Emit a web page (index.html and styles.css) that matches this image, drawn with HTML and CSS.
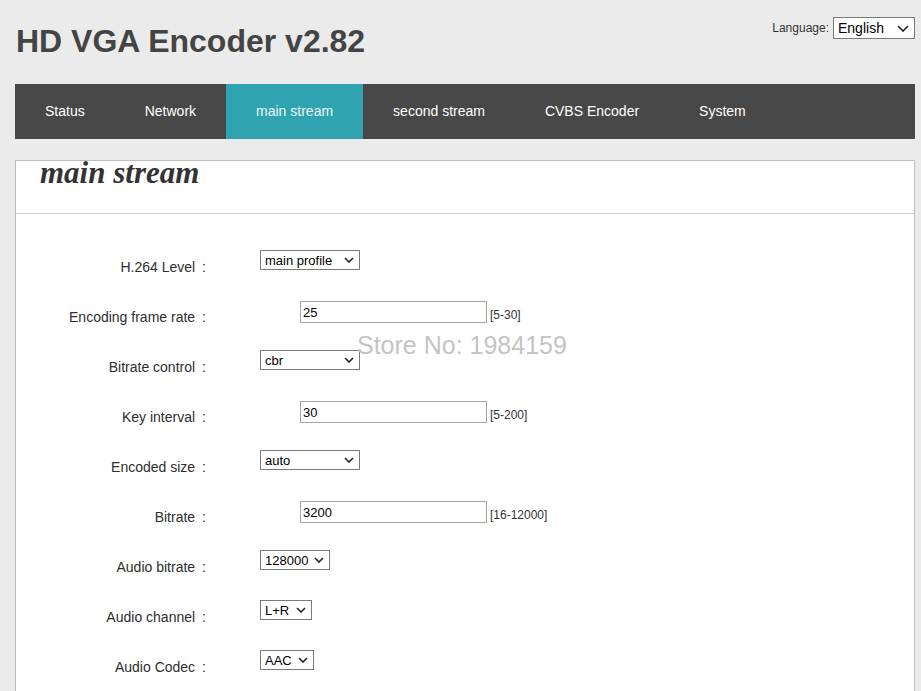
FILE: index.html
```html
<!DOCTYPE html>
<html lang="en">
<head>
<meta charset="utf-8">
<title>HD VGA Encoder v2.82</title>
<link rel="stylesheet" href="styles.css">
</head>
<body>
<div class="page">
  <header class="top">
    <h1 class="title">HD VGA Encoder v2.82</h1>
    <div class="lang">
      <span class="lang-label">Language:</span>
      <span class="select lang-select">English<svg class="chev" width="12" height="7" viewBox="0 0 12 7"><path d="M1 1 L6 6 L11 1" fill="none" stroke="#222" stroke-width="1.6"/></svg></span>
    </div>
  </header>

  <nav class="nav">
    <a class="nav-item">Status</a>
    <a class="nav-item">Network</a>
    <a class="nav-item active">main stream</a>
    <a class="nav-item">second stream</a>
    <a class="nav-item">CVBS Encoder</a>
    <a class="nav-item">System</a>
  </nav>

  <section class="panel">
    <div class="panel-head"><h2 class="panel-title">main stream</h2></div>
    <div class="panel-body">
      <div class="row">
        <label class="lbl">H.264 Level&ensp;:</label>
        <span class="select sel w100">main profile<svg class="chev" width="10" height="6" viewBox="0 0 10 6"><path d="M1 1 L5 5 L9 1" fill="none" stroke="#222" stroke-width="1.6"/></svg></span>
      </div>
      <div class="row">
        <label class="lbl">Encoding frame rate&ensp;:</label>
        <span class="field"><span class="input">25</span><span class="range">[5-30]</span></span>
      </div>
      <div class="row">
        <label class="lbl">Bitrate control&ensp;:</label>
        <span class="select sel w100">cbr<svg class="chev" width="10" height="6" viewBox="0 0 10 6"><path d="M1 1 L5 5 L9 1" fill="none" stroke="#222" stroke-width="1.6"/></svg></span>
      </div>
      <div class="row">
        <label class="lbl">Key interval&ensp;:</label>
        <span class="field"><span class="input">30</span><span class="range">[5-200]</span></span>
      </div>
      <div class="row">
        <label class="lbl">Encoded size&ensp;:</label>
        <span class="select sel w100">auto<svg class="chev" width="10" height="6" viewBox="0 0 10 6"><path d="M1 1 L5 5 L9 1" fill="none" stroke="#222" stroke-width="1.6"/></svg></span>
      </div>
      <div class="row">
        <label class="lbl">Bitrate&ensp;:</label>
        <span class="field"><span class="input">3200</span><span class="range">[16-12000]</span></span>
      </div>
      <div class="row">
        <label class="lbl">Audio bitrate&ensp;:</label>
        <span class="select sel w70">128000<svg class="chev" width="10" height="6" viewBox="0 0 10 6"><path d="M1 1 L5 5 L9 1" fill="none" stroke="#222" stroke-width="1.6"/></svg></span>
      </div>
      <div class="row">
        <label class="lbl">Audio channel&ensp;:</label>
        <span class="select sel w52">L+R<svg class="chev" width="10" height="6" viewBox="0 0 10 6"><path d="M1 1 L5 5 L9 1" fill="none" stroke="#222" stroke-width="1.6"/></svg></span>
      </div>
      <div class="row">
        <label class="lbl">Audio Codec&ensp;:</label>
        <span class="select sel w54">AAC<svg class="chev" width="10" height="6" viewBox="0 0 10 6"><path d="M1 1 L5 5 L9 1" fill="none" stroke="#222" stroke-width="1.6"/></svg></span>
      </div>
    </div>
  </section>

  <div class="watermark">Store No: 1984159</div>
</div>
</body>
</html>
```

FILE: styles.css
```css
html, body {
  margin: 0;
  padding: 0;
  background: #ebebeb;
  font-family: "Liberation Sans", Arial, sans-serif;
  color: #333;
}

.page {
  position: relative;
  width: 900px;
  margin-left: 15px;
}

.top {
  height: 84px;
  display: flex;
  justify-content: space-between;
  align-items: flex-start;
}

.title {
  margin: 23px 0 0 1px;
  font-size: 32px;
  line-height: 36px;
  font-weight: bold;
  color: #444;
}

.lang {
  margin-top: 17px;
  display: flex;
  align-items: center;
  gap: 4px;
}

.lang-label {
  font-size: 12px;
  color: #333;
}

.select {
  display: inline-flex;
  align-items: center;
  justify-content: space-between;
  box-sizing: border-box;
  background: #fff;
  border: 1px solid #7a7a7a;
  color: #000;
}

.lang-select {
  width: 82px;
  height: 22px;
  font-size: 14px;
  padding: 0 5px 0 4px;
}

.sel {
  height: 20px;
  font-size: 13px;
  padding: 0 5px 0 4px;
  margin: 5px 0 0 54px;
}

.w100 { width: 100px; }
.w70 { width: 70px; }
.w52 { width: 52px; }
.w54 { width: 54px; }

.chev { display: block; flex: none; }

.nav {
  display: flex;
  height: 55px;
  background: #484848;
}

.nav-item {
  padding: 0 30px;
  line-height: 55px;
  font-size: 14px;
  color: #fff;
  text-decoration: none;
}

.nav-item.active {
  background: #2fa4b0;
  color: #eaf7f8;
}

.panel {
  margin-top: 21px;
  background: #fff;
  border: 1px solid #bdbdbd;
  min-height: 600px;
}

.panel-head {
  height: 52px;
  border-bottom: 1px solid #c6c6c6;
  padding-left: 24px;
}

.panel-title {
  margin: 0;
  font-family: "Liberation Serif", "Times New Roman", serif;
  font-style: italic;
  font-weight: bold;
  font-size: 31px;
  line-height: 24px;
  color: #333;
}

.panel-body {
  padding-top: 31px;
}

.row {
  display: flex;
  align-items: flex-start;
  height: 50px;
}

.lbl {
  width: 190px;
  text-align: right;
  margin-top: 14px;
  font-size: 14px;
  line-height: 16px;
  color: #2e2e2e;
}

.field {
  display: flex;
  align-items: flex-start;
  margin: 6px 0 0 94px;
}

.input {
  display: flex;
  align-items: center;
  box-sizing: border-box;
  width: 187px;
  height: 22px;
  padding: 0 2px;
  border: 1px solid #a6a6a6;
  background: #fff;
  font-size: 13px;
  color: #000;
}

.range {
  margin: 7px 0 0 3px;
  font-size: 12px;
  line-height: 14px;
  color: #333;
}

.watermark {
  position: absolute;
  left: 342px;
  top: 331px;
  font-size: 25px;
  line-height: 28px;
  color: #c4c4c4;
  white-space: nowrap;
}
```
